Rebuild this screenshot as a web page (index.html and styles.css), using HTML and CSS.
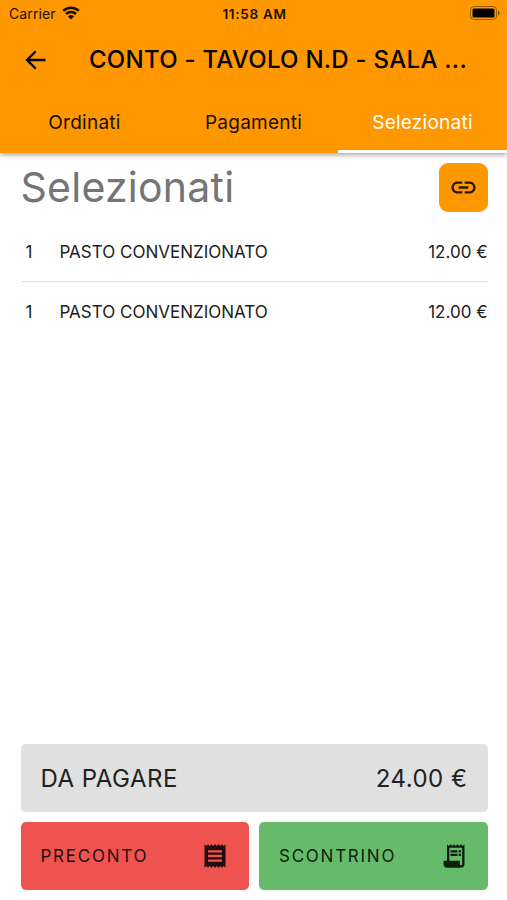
FILE: index.html
```
<!DOCTYPE html>
<html lang="it">
<head>
  <meta charset="UTF-8">
  <meta name="viewport" content="width=device-width, initial-scale=1.0">
  <title>Conto</title>
  <link rel="stylesheet" href="styles.css">
</head>
<body>
  <header class="app-bar">
    <div class="status-bar">
      <div class="carrier">
        <span>Carrier</span>
        <svg class="wifi" viewBox="0 0 18 14">
          <path d="M1.2 4.9a11.2 11.2 0 0 1 15.6 0M4 8a7.2 7.2 0 0 1 10 0" fill="none" stroke="currentColor" stroke-width="2.6"/>
          <path d="M9 13.5l-3-3a4.3 4.3 0 0 1 6 0z"/>
        </svg>
      </div>
      <span class="time">11:58 AM</span>
      <svg class="battery" viewBox="0 0 30 14">
        <rect x=".5" y=".5" width="26" height="13" rx="3.5" fill="none" stroke="#000" stroke-opacity=".4"/>
        <rect x="2.5" y="2.5" width="22" height="9" rx="1.5"/>
        <path d="M28 4.6c2 .8 2 4 0 4.8z" opacity=".5"/>
      </svg>
    </div>
    <div class="toolbar">
      <svg class="back" viewBox="0 0 22 20">
        <path d="M10.8 1.2L2 10l8.8 8.8M2 10h18.5" fill="none" stroke="currentColor" stroke-width="2.3"/>
      </svg>
      <h1 class="title">CONTO - TAVOLO N.D - SALA ...</h1>
    </div>
    <nav class="tabs">
      <a class="tab">Ordinati</a>
      <a class="tab">Pagamenti</a>
      <a class="tab active">Selezionati</a>
    </nav>
  </header>

  <main class="content">
    <div class="heading">
      <h2>Selezionati</h2>
      <button class="link-button" aria-label="Collega">
        <svg viewBox="0 0 24 24"><path d="M3.9 12c0-1.710 1.390-3.100 3.100-3.100h4V7H7c-2.760 0-5 2.240-5 5s2.240 5 5 5h4v-1.900H7c-1.710 0-3.100-1.390-3.100-3.100zM8 13h8v-2H8v2zm9-6h-4v1.900h4c1.710 0 3.100 1.390 3.100 3.100s-1.390 3.100-3.100 3.100h-4V17h4c2.760 0 5-2.240 5-5s-2.240-5-5-5z"/></svg>
      </button>
    </div>
    <ul class="items">
      <li class="item">
        <span class="qty">1</span>
        <span class="name">PASTO CONVENZIONATO</span>
        <span class="price">12.00 €</span>
      </li>
      <li class="item">
        <span class="qty">1</span>
        <span class="name">PASTO CONVENZIONATO</span>
        <span class="price">12.00 €</span>
      </li>
    </ul>
  </main>

  <footer class="footer">
    <div class="total">
      <span>DA PAGARE</span>
      <span>24.00 €</span>
    </div>
    <div class="actions">
      <button class="action red">
        <span>PRECONTO</span>
        <svg viewBox="0 0 24 24"><path d="M18 17H6v-2h12v2zm0-4H6v-2h12v2zm0-4H6V7h12v2zM3 22l1.500-1.500L6 22l1.500-1.500L9 22l1.500-1.500L12 22l1.500-1.500L15 22l1.500-1.500L18 22l1.500-1.500L21 22V2l-1.500 1.500L18 2l-1.500 1.500L15 2l-1.500 1.500L12 2l-1.500 1.500L9 2 7.500 3.500 6 2 4.500 3.500 3 2v20z"/></svg>
      </button>
      <button class="action green">
        <span>SCONTRINO</span>
        <svg viewBox="0 0 24 24"><path d="M19.500 3.500L18 2l-1.500 1.500L15 2l-1.500 1.500L12 2l-1.500 1.500L9 2 7.500 3.500 6 2v14H3v3c0 1.660 1.340 3 3 3h12c1.660 0 3-1.340 3-3V2l-1.500 1.500zM19 19c0 .55-.45 1-1 1s-1-.45-1-1v-3H8V5h11v14z"/><path d="M9 7h6v2H9zM16 7h2v2h-2zM9 10h6v2H9zM16 10h2v2h-2z"/></svg>
      </button>
    </div>
  </footer>
</body>
</html>
```
FILE: styles.css
```
* {
  box-sizing: border-box;
}

body {
  margin: 0;
  height: 100vh;
  display: flex;
  flex-direction: column;
  font-family: Inter, "Liberation Sans", sans-serif;
  background-color: #fff;
  color: #212121;
  overflow: hidden;
}

svg {
  display: block;
  fill: currentColor;
}

h1, h2, ul {
  margin: 0;
  padding: 0;
  font-weight: 400;
}

button {
  border: none;
  font-family: inherit;
  color: inherit;
}

.app-bar {
  height: 153px;
  background-color: #ff9800;
  box-shadow: 0 2px 5px rgba(0, 0, 0, 0.35);
  color: #1a0f00;
}

.status-bar {
  height: 27px;
  padding: 0 7px 0 9px;
  display: grid;
  grid-template-columns: 1fr auto 1fr;
  align-items: center;
  font-size: 14px;
}

.carrier {
  display: flex;
  align-items: center;
  gap: 6px;
  letter-spacing: 0.1px;
}

.wifi {
  width: 18px;
  height: 14px;
  margin-bottom: 2px;
}

.time {
  font-weight: 600;
  font-size: 13.5px;
  letter-spacing: 0.7px;
}

.battery {
  width: 30px;
  height: 14px;
  margin-bottom: 1px;
  justify-self: end;
  color: #000;
}

.toolbar {
  height: 65px;
  padding-left: 25px;
  display: flex;
  align-items: center;
  gap: 42px;
  color: #000;
}

.back {
  width: 22px;
  height: 20px;
}

.title {
  font-size: 24px;
  font-weight: 500;
  letter-spacing: 0.26px;
  white-space: nowrap;
}

.tabs {
  height: 61px;
  display: grid;
  grid-template-columns: repeat(3, 1fr);
}

.tab {
  display: flex;
  align-items: center;
  justify-content: center;
  padding-top: 2px;
  font-size: 19px;
  letter-spacing: 0.25px;
  border-bottom: 3px solid transparent;
}

.tab.active {
  color: #fff;
  border-bottom-color: #fff;
}

.content {
  flex: 1;
  padding: 10px 19.5px 0 20.5px;
}

.heading {
  height: 49px;
  display: flex;
  align-items: center;
  justify-content: space-between;
}

.heading h2 {
  padding-bottom: 2px;
  font-size: 41px;
  letter-spacing: 0.25px;
  color: #757575;
}

.link-button {
  width: 49px;
  height: 49px;
  padding: 10px;
  border-radius: 9px;
  background-color: #ff9800;
  color: #291800;
}

.link-button svg {
  width: 29px;
  height: 29px;
}

.items {
  list-style: none;
  padding-top: 10px;
}

.item {
  height: 59px;
  display: flex;
  align-items: center;
  font-size: 17px;
}

.item + .item {
  height: 61px;
  border-top: 1px solid #e0e0e0;
}

.qty {
  width: 39px;
  padding-left: 5px;
}

.name {
  flex: 1;
}

.footer {
  padding: 0 19.5px 10px 20.5px;
}

.total {
  height: 68px;
  margin-bottom: 10px;
  padding: 0 20px;
  display: flex;
  align-items: center;
  justify-content: space-between;
  border-radius: 5px;
  background-color: #e0e0e0;
  font-size: 24px;
  letter-spacing: 0.5px;
}

.actions {
  display: grid;
  grid-template-columns: 1fr 1fr;
  gap: 10px;
}

.action {
  height: 68px;
  padding: 0 20px;
  display: flex;
  align-items: center;
  justify-content: space-between;
  border-radius: 5px;
  font-size: 17px;
  letter-spacing: 1.75px;
}

.action svg {
  width: 28px;
  height: 28px;
}

.red {
  background-color: #ef5350;
  color: #260d0d;
}

.green {
  background-color: #66bb6a;
  color: #101e11;
}
```
